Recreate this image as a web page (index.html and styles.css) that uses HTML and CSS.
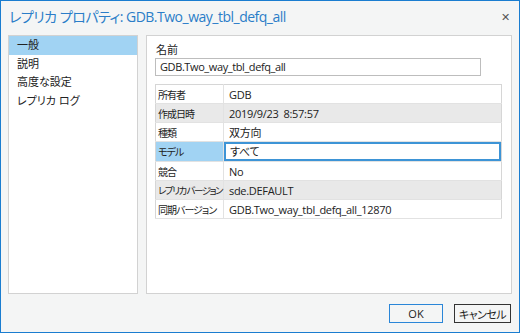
FILE: index.html
```html
<!DOCTYPE html>
<html lang="ja">
<head>
  <meta charset="UTF-8">
  <title>レプリカ プロパティ</title>
  <link rel="stylesheet" href="styles.css">
</head>
<body>

  <div class="window">
    <div class="title-bar">
      <h1>レプリカ プロパティ: GDB.Two_way_tbl_defq_all</h1>
      <span class="close">✕</span>
    </div>

    <div class="main">
      <ul class="side-list">
        <li class="selected">一般</li>
        <li>説明</li>
        <li>高度な設定</li>
        <li>レプリカ ログ</li>
      </ul>

      <div class="content">
        <label class="field-label">名前</label>
        <div class="name-box">GDB.Two_way_tbl_defq_all</div>

        <table class="props">
          <tr><td class="key">所有者</td><td>GDB</td></tr>
          <tr class="gray"><td class="key">作成日時</td><td>2019/9/23&nbsp;&nbsp;8:57:57</td></tr>
          <tr><td class="key">種類</td><td>双方向</td></tr>
          <tr class="active"><td class="key">モデル</td><td><div class="edit">すべて</div></td></tr>
          <tr><td class="key">競合</td><td>No</td></tr>
          <tr class="gray"><td class="key tight">レプリカ バージョン</td><td>sde.DEFAULT</td></tr>
          <tr><td class="key">同期バージョン</td><td>GDB.Two_way_tbl_defq_all_12870</td></tr>
        </table>
      </div>
    </div>

    <div class="footer">
      <button class="btn ok">OK</button>
      <button class="btn">キャンセル</button>
    </div>
  </div>

</body>
</html>
```

FILE: styles.css
```css
body {
  margin: 0;
  font-family: "Open Sans", "Noto Sans CJK JP", sans-serif;
  font-feature-settings: "palt";
  font-size: 11px;
  color: #222;
}

.window {
  width: 520px;
  height: 333px;
  box-sizing: border-box;
  border: 1px solid #1a7dd0;
  background-color: #f4f5f5;
  display: flex;
  flex-direction: column;
}

.title-bar {
  height: 33px;
  display: flex;
  justify-content: space-between;
  align-items: center;
  padding: 0 9px 3px 8px;
  box-sizing: border-box;
}

.title-bar h1 {
  margin: 0;
  font-size: 14px;
  font-weight: normal;
  color: #2b7dc8;
  letter-spacing: -0.5px;
}

.close {
  font-size: 11px;
  color: #555;
}

.main {
  display: flex;
  gap: 8px;
  padding: 1px 7px 0 7px;
  height: 259px;
}

.side-list {
  list-style: none;
  margin: 0;
  padding: 0;
  width: 130px;
  background-color: white;
  border: 1px solid #d2d2d2;
  box-sizing: border-box;
}

.side-list li {
  height: 18.5px;
  line-height: 18px;
  padding-left: 8px;
}

.side-list li.selected {
  background-color: #a1d3f3;
}

.content {
  flex: 1;
  background-color: white;
  border: 1px solid #d2d2d2;
  padding: 7px 9px 0 8px;
}

.field-label {
  display: block;
  height: 15px;
  line-height: 14px;
  padding-left: 1px;
}

.name-box {
  width: 326px;
  height: 18px;
  box-sizing: border-box;
  border: 1px solid #bdbdbd;
  line-height: 16px;
  padding-left: 4px;
  font-size: 11px;
  letter-spacing: -0.4px;
}

.props {
  margin-top: 8px;
  width: 347px;
  table-layout: fixed;
  border-collapse: collapse;
  border: 1px solid #d6d6d6;
}

.props td {
  height: 18px;
  padding: 0 0 0 5px;
  border-bottom: 1px solid #e2e2e2;
  white-space: nowrap;
  letter-spacing: -0.3px;
}

.props td.key {
  width: 65px;
  border-right: 1px solid #e2e2e2;
  padding-left: 2px;
  font-size: 10px;
  letter-spacing: -1px;
}

.props td.key.tight {
  font-size: 9.5px;
  letter-spacing: -1.5px;
}

.props tr.gray td {
  background-color: #e9e9e9;
}

.props tr.active td.key {
  background-color: #a1d3f3;
}

.props tr.active td:last-child {
  padding: 0;
}

.edit {
  height: 19px;
  box-sizing: border-box;
  border: 2px solid #3d94d6;
  line-height: 15px;
  padding-left: 4px;
}

.footer {
  display: flex;
  justify-content: flex-end;
  gap: 11px;
  padding: 10px 8px 0 0;
}

.btn {
  height: 19px;
  font-family: "Open Sans", "Noto Sans CJK JP", sans-serif;
  font-feature-settings: "palt";
  font-size: 11px;
  background-color: #f4f5f5;
  border: 1px solid #333;
  padding: 0;
  color: #222;
}

.btn.ok {
  width: 54px;
  border-color: #2a86d8;
}

.btn:last-child {
  width: 57px;
  letter-spacing: -0.5px;
}
```
